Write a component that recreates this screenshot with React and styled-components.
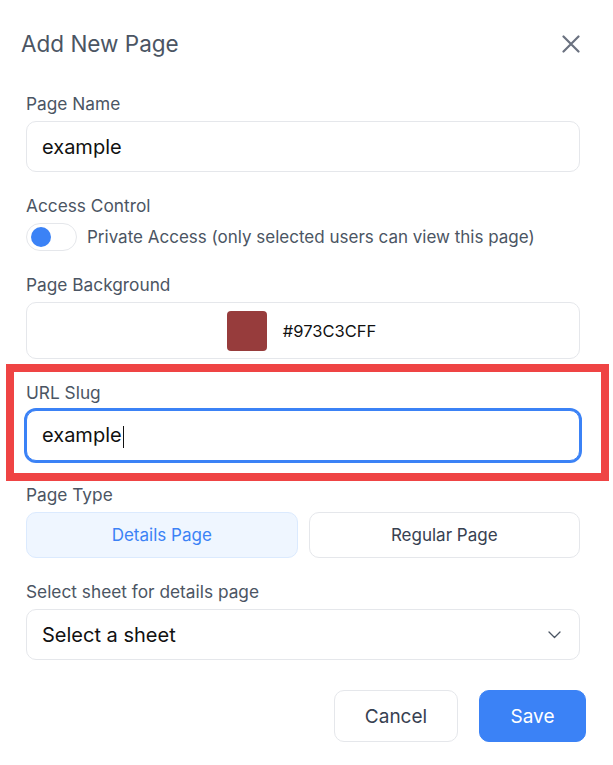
import styled, { createGlobalStyle } from "styled-components"

const GlobalStyle = createGlobalStyle`
	html, body {
		margin: 0;
		padding: 0;
		background: #ffffff;
	}
	body {
		font-family: "Inter", "Liberation Sans", sans-serif;
		color: #111827;
	}
	* {
		box-sizing: border-box;
	}
`

const Dialog = styled.div`
	width: 613px;
	height: 765px;
	background: #fff;
	padding-top: 28px;
`

const Header = styled.div`
	display: flex;
	align-items: center;
	justify-content: space-between;
	padding: 0 33px 0 21px;
	height: 32px;
`

const Title = styled.h2`
	margin: 0;
	font-size: 22.5px;
	font-weight: 400;
	color: #4b5563;
	line-height: 32px;
`

const CloseButton = styled.button`
	border: none;
	background: none;
	padding: 0;
	width: 18px;
	height: 18px;
	display: flex;
	cursor: pointer;
	color: #6b7280;
`

const Body = styled.div`
	display: flex;
	flex-direction: column;
	gap: 22px;
	padding: 32px 33px 0 26px;
`

const Field = styled.div`
	position: relative;
	display: flex;
	flex-direction: column;
	gap: 5px;
`

const Label = styled.label`
	font-size: 17.3px;
	line-height: 24px;
	color: #4b5563;
`

const Box = styled.div`
	display: flex;
	align-items: center;
	justify-content: ${(p) => (p.$center ? "center" : "space-between")};
	gap: 16px;
	height: ${(p) => p.$height || 51}px;
	padding: 0 18px 0 15px;
	border: 1px solid ${(p) => (p.$focused ? "#3b82f6" : "#e5e7eb")};
	box-shadow: ${(p) => (p.$focused ? "0 0 0 2px #3b82f6" : "none")};
	border-radius: 10px;
	font-size: 20px;
	color: #111;
	background: #fff;
`

const Caret = styled.span`
	display: inline-block;
	width: 1px;
	height: 22px;
	background: #111;
	vertical-align: middle;
	margin-left: 1px;
`

const Highlight = styled.div`
	position: absolute;
	left: -20px;
	right: -29px;
	top: -17px;
	bottom: -20px;
	border: 8px solid #ef4444;
	pointer-events: none;
`

const ToggleRow = styled.div`
	display: flex;
	align-items: center;
	gap: 10px;
	font-size: 17px;
	color: #4b5563;
`

const Track = styled.div`
	width: 51px;
	height: 28px;
	flex-shrink: 0;
	border: 1px solid #e5e7eb;
	border-radius: 14px;
	padding: 3px 4px;
	display: flex;
	align-items: center;
`

const Knob = styled.span`
	width: 20px;
	height: 20px;
	border-radius: 50%;
	background: #3b82f6;
`

const Swatch = styled.span`
	width: 40px;
	height: 40px;
	border-radius: 4px;
	background: ${(p) => p.$color};
`

const SwatchText = styled.span`
	font-size: 16.5px;
	color: #111;
`

const Segments = styled.div`
	display: grid;
	grid-template-columns: 1fr 1fr;
	gap: 11px;
`

const Segment = styled.button`
	height: 46px;
	border-radius: 10px;
	font-family: inherit;
	font-size: 17px;
	border: 1px solid ${(p) => (p.$active ? "#dbeafe" : "#e5e7eb")};
	background: ${(p) => (p.$active ? "#eff6ff" : "#fff")};
	color: ${(p) => (p.$active ? "#3b82f6" : "#374151")};
`

const Footer = styled.div`
	display: flex;
	justify-content: flex-end;
	gap: 21px;
	padding: 30px 27px 0 0;
`

const FooterButton = styled.button`
	height: 52px;
	width: ${(p) => p.$width}px;
	border-radius: 10px;
	font-family: inherit;
	font-size: 19px;
	border: 1px solid ${(p) => (p.$primary ? "#3b82f6" : "#e5e7eb")};
	background: ${(p) => (p.$primary ? "#3b82f6" : "#fff")};
	color: ${(p) => (p.$primary ? "#fff" : "#374151")};
`

function App() {
	return (
		<Dialog>
			<GlobalStyle />
			<Header>
				<Title>Add New Page</Title>
				<CloseButton aria-label="Close">
					<svg width="18" height="18" viewBox="0 0 18 18" fill="none" stroke="currentColor" strokeWidth="2.2" strokeLinecap="round">
						<path d="M1.5 1.5 L16.5 16.5 M16.5 1.5 L1.5 16.5" />
					</svg>
				</CloseButton>
			</Header>
			<Body>
				<Field>
					<Label>Page Name</Label>
					<Box>example</Box>
				</Field>
				<Field>
					<Label>Access Control</Label>
					<ToggleRow>
						<Track>
							<Knob />
						</Track>
						Private Access (only selected users can view this page)
					</ToggleRow>
				</Field>
				<Field>
					<Label>Page Background</Label>
					<Box $center $height={57}>
						<Swatch $color="#973C3C" />
						<SwatchText>#973C3CFF</SwatchText>
					</Box>
				</Field>
				<Field>
					<Label>URL Slug</Label>
					<Box $focused>
						<span>
							example
							<Caret />
						</span>
					</Box>
					<Highlight />
				</Field>
				<Field>
					<Label>Page Type</Label>
					<Segments>
						<Segment $active>Details Page</Segment>
						<Segment>Regular Page</Segment>
					</Segments>
				</Field>
				<Field>
					<Label>Select sheet for details page</Label>
					<Box>
						Select a sheet
						<svg width="13" height="8" viewBox="0 0 13 8" fill="none" stroke="#4b5563" strokeWidth="1.3" strokeLinecap="round" strokeLinejoin="round">
							<path d="M1 1 L6.5 6.5 L12 1" />
						</svg>
					</Box>
				</Field>
			</Body>
			<Footer>
				<FooterButton $width={124}>Cancel</FooterButton>
				<FooterButton $primary $width={107}>Save</FooterButton>
			</Footer>
		</Dialog>
	)
}

export default App
